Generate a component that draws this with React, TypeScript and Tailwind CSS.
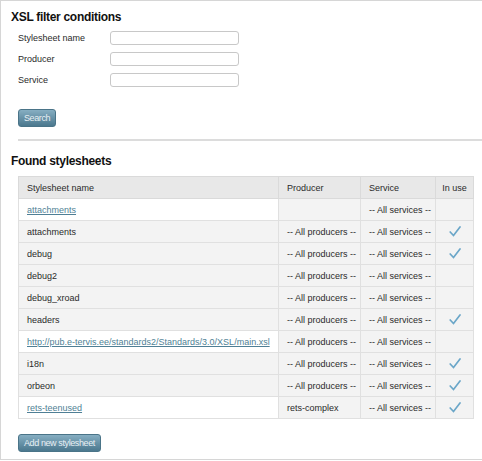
import React from "react";

interface Row {
  name: string;
  link?: boolean;
  producer: string;
  service: string;
  inUse: boolean;
}

const rows: Row[] = [
  { name: "attachments", link: true, producer: "", service: "-- All services --", inUse: false },
  { name: "attachments", producer: "-- All producers --", service: "-- All services --", inUse: true },
  { name: "debug", producer: "-- All producers --", service: "-- All services --", inUse: true },
  { name: "debug2", producer: "-- All producers --", service: "-- All services --", inUse: false },
  { name: "debug_xroad", producer: "-- All producers --", service: "-- All services --", inUse: false },
  { name: "headers", producer: "-- All producers --", service: "-- All services --", inUse: true },
  {
    name: "http://pub.e-tervis.ee/standards2/Standards/3.0/XSL/main.xsl",
    link: true,
    producer: "-- All producers --",
    service: "-- All services --",
    inUse: false,
  },
  { name: "i18n", producer: "-- All producers --", service: "-- All services --", inUse: true },
  { name: "orbeon", producer: "-- All producers --", service: "-- All services --", inUse: true },
  { name: "rets-teenused", link: true, producer: "rets-complex", service: "-- All services --", inUse: true },
];

const Check = () => (
  <svg width="12" height="11" viewBox="0 0 12 11" className="mx-auto block">
    <path d="M1.2 6 L4.5 9.5 L11 1" fill="none" stroke="#6aa6c8" strokeWidth="1.7" strokeLinecap="round" />
  </svg>
);

const Button = ({ children }: { children: React.ReactNode }) => (
  <button className="h-[18px] rounded-[3px] border border-[#4a7488] bg-gradient-to-b from-[#86aec2] to-[#4b788e] px-[5px] text-[9px] leading-none tracking-[-0.4px] text-[#e8f0f4]">
    {children}
  </button>
);

export default function App() {
  const labels = ["Stylesheet name", "Producer", "Service"];
  return (
    <div className="h-[460px] w-[482px] border-l border-t border-b border-[#d6d6d6] bg-white font-['Liberation_Sans',sans-serif] text-[#2a2a2a]">
      <div className="px-[10px] pt-[8px]">
        <h2 className="text-[12px] font-bold leading-[16px] tracking-[-0.3px] text-[#111]">XSL filter conditions</h2>
        <div className="mt-[6px] flex flex-col gap-[7px] pl-[7px]">
          {labels.map((l) => (
            <div key={l} className="flex h-[14px] items-center">
              <span className="w-[92px] text-[9px] leading-[14px]">{l}</span>
              <input className="h-[14px] w-[129px] rounded-[3px] border border-[#c8c8c8] bg-white" />
            </div>
          ))}
        </div>
        <div className="mt-[22px] flex pl-[7px]">
          <Button>Search</Button>
        </div>
      </div>
      <div className="ml-[17px] mt-[12px] h-[2px] bg-[#dcdcdc]" />
      <div className="px-[10px] pt-[12px]">
        <h2 className="text-[12px] font-bold leading-[16px] tracking-[-0.3px] text-[#111]">Found stylesheets</h2>
        <table className="ml-[7px] mt-[7px] w-[455px] table-fixed border-collapse text-[9px] leading-[12px]">
          <colgroup>
            <col className="w-[260px]" />
            <col className="w-[82px]" />
            <col className="w-[75px]" />
            <col className="w-[38px]" />
          </colgroup>
          <thead>
            <tr className="h-[22px] bg-[#e8e8e8]">
              <th className="border border-[#dadada] px-[8px] text-left font-normal">Stylesheet name</th>
              <th className="border border-[#dadada] px-[8px] text-left font-normal">Producer</th>
              <th className="border border-[#dadada] px-[8px] text-left font-normal">Service</th>
              <th className="border border-[#dadada] px-[4px] text-center font-normal">In use</th>
            </tr>
          </thead>
          <tbody>
            {rows.map((r, i) => (
              <tr key={i} className="h-[22px] bg-[#f3f3f3]">
                <td
                  className={`overflow-hidden whitespace-nowrap border border-[#e0e0e0] px-[8px] ${r.link ? "bg-white text-[#4f7f95] underline" : ""}`}
                >
                  {r.name}
                </td>
                <td className="whitespace-nowrap border border-[#e0e0e0] px-[8px]">{r.producer}</td>
                <td className="whitespace-nowrap border border-[#e0e0e0] px-[8px]">{r.service}</td>
                <td className="border border-[#e0e0e0] text-center">{r.inUse ? <Check /> : null}</td>
              </tr>
            ))}
          </tbody>
        </table>
        <div className="mt-[15px] flex pl-[7px]">
          <Button>Add new stylesheet</Button>
        </div>
      </div>
    </div>
  );
}
